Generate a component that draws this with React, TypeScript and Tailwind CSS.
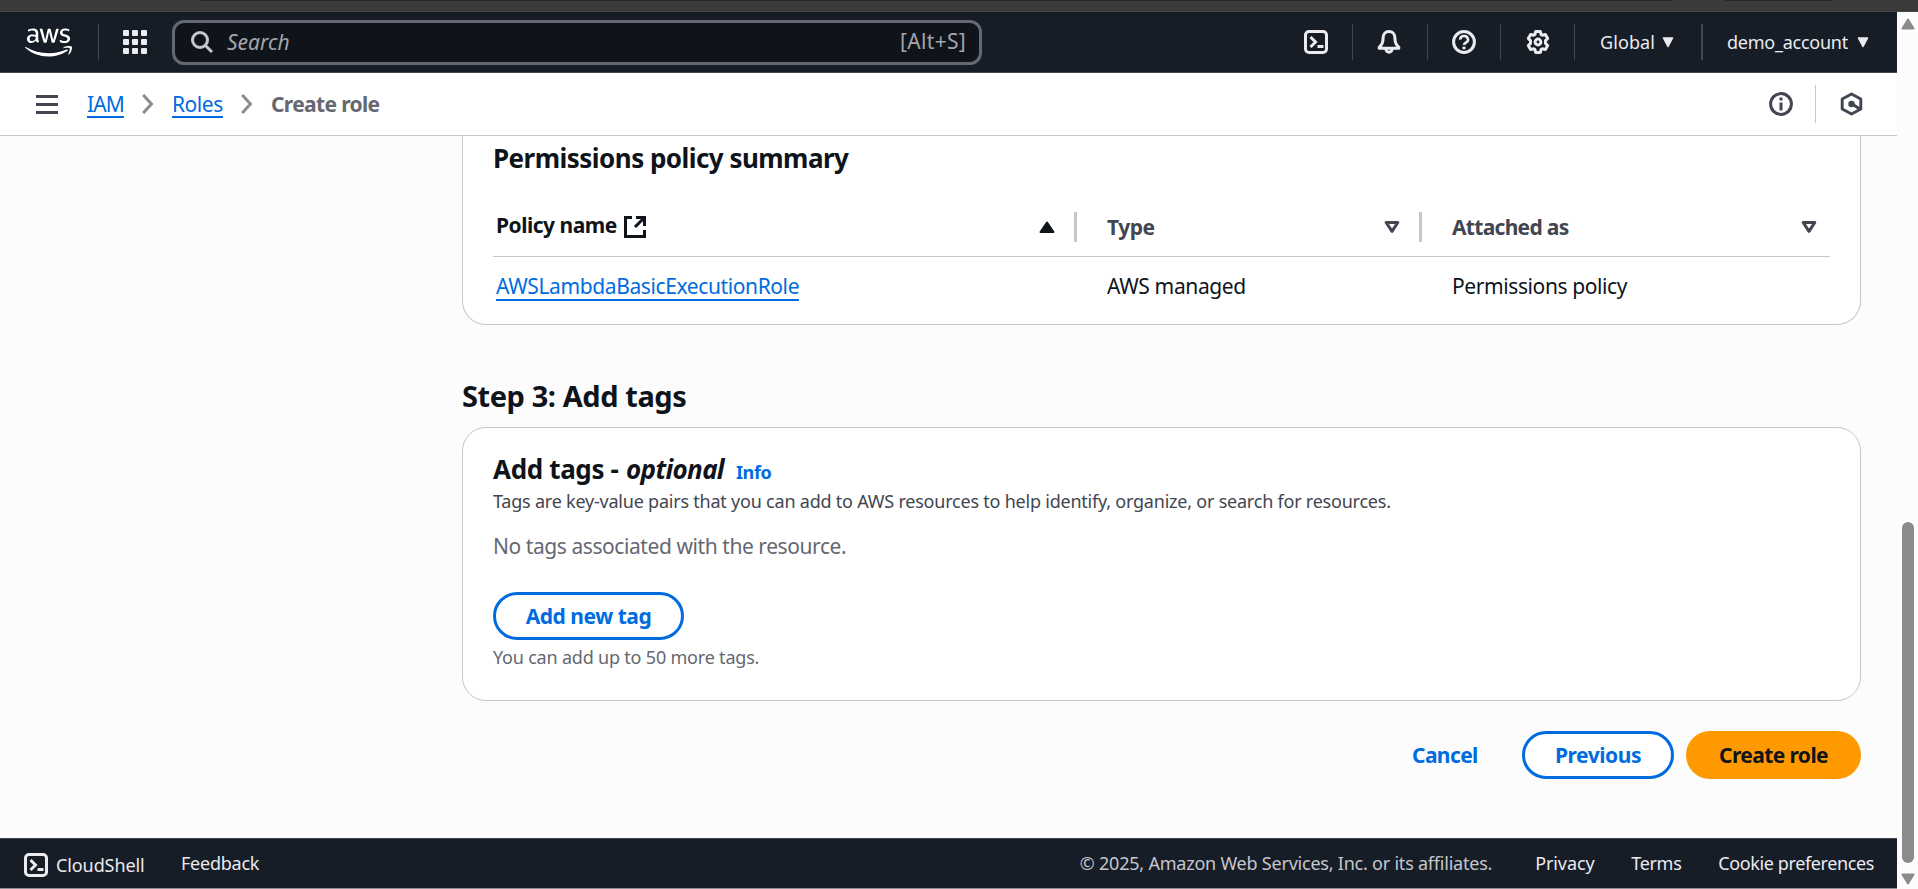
import type { ReactNode } from "react";
import { FaAws } from "react-icons/fa";

function ShellIcon() {
  return (
    <svg className="block size-6 shrink-0" viewBox="0 0 24 24" fill="none" stroke="#ebebf0" strokeWidth="3">
      <rect x="1.5" y="1.5" width="21" height="21" rx="3.5" />
      <path d="M6.5 7 11.5 12 6.5 17" />
      <path d="M13.5 16.5h6" />
    </svg>
  );
}

function BellIcon() {
  return (
    <svg className="block size-6" viewBox="0 0 24 24" fill="none" stroke="#ebebf0" strokeWidth="3" strokeLinejoin="round">
      <path d="M12 1.5c-3.9 0-5.900 2.800-5.900 6.500 0 4.600-1 7-3.900 9.200v1h19.600v-1c-2.900-2.200-3.900-4.600-3.900-9.200 0-3.700-2-6.500-5.900-6.500Z" />
      <path d="M8.900 19a3.100 3.300 0 0 0 6.200 0" />
    </svg>
  );
}

function HelpIcon() {
  return (
    <svg className="block size-6" viewBox="0 0 24 24" fill="none" stroke="#ebebf0" strokeWidth="3">
      <circle cx="12" cy="12" r="10.400" />
      <path d="M8.200 9.600a3.900 3.500 0 1 1 5.500 3.100c-1.100.5-1.600 1-1.600 2.400" strokeWidth="2.600" />
      <path d="M12 16.600v2.700" />
    </svg>
  );
}

function GearIcon() {
  return (
    <svg className="block size-6" viewBox="0 0 24 24" fill="none" stroke="#ebebf0" strokeWidth="3" strokeLinejoin="round">
      <path d="M9.600 1.600h4.800l.7 3 1.300.7 3-.9 2.300 4-2.200 2.200v2.800l2.200 2.200-2.300 4-3-.9-1.300.7-.7 3H9.600l-.7-3-1.300-.7-3 .9-2.300-4 2.200-2.200v-2.800L2.300 8.400l2.300-4 3 .9 1.300-.7Z" />
      <circle cx="12" cy="12" r="2.900" />
    </svg>
  );
}

function CaretDown() {
  return (
    <svg className="block h-[11px] w-3" viewBox="0 0 12 11">
      <path d="M1.500 1h9L6 9.500Z" fill="#ebebf0" stroke="#ebebf0" strokeWidth="1.600" strokeLinejoin="round" />
    </svg>
  );
}

function SortCaret() {
  return (
    <svg className="block h-3 w-4 shrink-0" viewBox="0 0 16 12" fill="none" stroke="#424650" strokeWidth="3" strokeLinejoin="round">
      <path d="M2.200 1.500h11.600L8 10.300Z" />
    </svg>
  );
}

function Chevron() {
  return (
    <svg className="block h-5 w-3" viewBox="0 0 12 20" fill="none" stroke="#8c8c94" strokeWidth="3">
      <path d="M1.200 1 9.500 10 1.200 19" />
    </svg>
  );
}

function Divider() {
  return <span className="h-9 w-px shrink-0 bg-[#424650]" />;
}

function Slot({ width, children }: { width: string; children: ReactNode }) {
  return <div className={`flex shrink-0 items-center justify-center ${width}`}>{children}</div>;
}

function Header() {
  return (
    <header className="flex h-[61px] items-center border-b border-[#424650] bg-[#161d26] text-[#ebebf0]">
      <div className="flex w-[98px] shrink-0 pl-[25px]">
        <FaAws className="h-[47px] w-[47px] text-white" />
      </div>
      <Divider />
      <div className="ml-6 grid size-6 shrink-0 grid-cols-3 gap-[3px]">
        {Array.from({ length: 9 }, (_, i) => (
          <span key={i} className="size-[6px] rounded-[1px] bg-[#ebebf0]" />
        ))}
      </div>
      <div className="ml-[25px] flex h-[45px] w-[810px] shrink-0 items-center rounded-xl border-[3px] border-[#656871] bg-[#0f141a] pr-[13px] pl-4 text-[21px] text-[#a4a4ad]">
        <svg className="block size-[22px]" viewBox="0 0 22 22" fill="none" stroke="#c6c6cd" strokeWidth="3">
          <circle cx="9" cy="9" r="7.500" />
          <path d="m14.200 14.200 6.800 6.800" />
        </svg>
        <span className="ml-[14px] flex-1 leading-[38px] italic">Search</span>
        <span className="tracking-[0.3px]">[Alt+S]</span>
      </div>
      <div className="ml-auto flex items-center text-lg">
        <Slot width="w-[72px]"><ShellIcon /></Slot>
        <Divider />
        <Slot width="w-[74px] pr-[2px]"><BellIcon /></Slot>
        <Divider />
        <Slot width="w-[72px]"><HelpIcon /></Slot>
        <Divider />
        <Slot width="w-[73px]"><GearIcon /></Slot>
        <Divider />
        <div className="flex w-[126px] items-center pl-[25px]">
          <span className="-mt-px w-[62px] tracking-[0.1px]">Global</span>
          <CaretDown />
        </div>
        <span className="h-9 w-[2px] bg-[#424650]" />
        <div className="flex w-[194px] items-center pl-[24px]">
          <span className="-mt-px w-[130px] tracking-[-0.25px]">demo_account</span>
          <CaretDown />
        </div>
      </div>
    </header>
  );
}

function Breadcrumbs() {
  return (
    <nav className="flex h-[63px] shrink-0 items-center border-b border-[#c6c6cd] bg-white pl-9 text-[21px]">
      <div className="flex w-[22px] flex-col gap-[5px]">
        <span className="h-[3px] bg-[#424650]" />
        <span className="h-[3px] bg-[#424650]" />
        <span className="h-[3px] bg-[#424650]" />
      </div>
      <a className="ml-[29px] h-[28px] w-[37px] border-b-2 border-[#006ce0] leading-[28px] tracking-[-0.9px] text-[#006ce0]">IAM</a>
      <div className="ml-[18px]"><Chevron /></div>
      <a className="ml-[18px] h-[28px] w-[51px] border-b-2 border-[#006ce0] leading-[28px] tracking-[-0.45px] text-[#006ce0]">Roles</a>
      <div className="ml-[18px]"><Chevron /></div>
      <span className="ml-[18px] leading-[28px] font-bold tracking-[-0.65px] text-[#656871]">Create role</span>
      <div className="ml-auto flex items-center">
        <svg className="block size-6" viewBox="0 0 24 24" fill="none" stroke="#424650" strokeWidth="3">
          <circle cx="12" cy="12" r="10.400" />
          <path d="M12 10.500v8M12 5.500v3" />
        </svg>
        <span className="ml-[22px] h-[38px] w-px bg-[#c6c6cd]" />
        <svg className="mr-[34px] ml-6 block h-6 w-[23px]" viewBox="0 0 23 24" fill="none" stroke="#424650" strokeWidth="2.900" strokeLinejoin="round">
          <path d="M11.500 1.900 2.200 7v10l9.300 5.100L20.800 17V7Z" />
          <path d="m12 12 7.500 4.800" />
          <circle cx="11.500" cy="12" r="1.800" fill="#424650" />
        </svg>
      </div>
    </nav>
  );
}

function PolicyCard() {
  return (
    <section className="h-[189px] rounded-b-3xl border border-t-0 border-[#c6c6cd] bg-white px-[30px]">
      <h2 className="h-[76px] pt-[2px] text-[26px] leading-[40px] font-bold tracking-[-0.53px]">Permissions policy summary</h2>
      <div className="flex h-[45px] border-b border-[#c6c6cd] text-[21px] leading-[30px] font-bold">
        <div className="flex h-[30px] w-[584px] items-center border-r-[3px] border-[#c6c6cd] pr-[19px] pl-[3px]">
          <span className="-mt-1 tracking-[-0.5px]">Policy name</span>
          <svg className="ml-[7px] block size-[22px]" viewBox="0 0 22 22" fill="none" stroke="#0f141a" strokeWidth="3">
            <path d="M8 1.500H1.500v19h19V14" />
            <path d="M12 1.500h8.500V10M20 2l-9 9" />
          </svg>
          <svg className="ml-auto block h-3 w-4" viewBox="0 0 16 12">
            <path d="M8 1.500 14.500 11h-13Z" fill="#0f141a" stroke="#0f141a" strokeWidth="2" strokeLinejoin="round" />
          </svg>
        </div>
        <div className="flex h-[30px] w-[345px] items-center justify-between border-r-[3px] border-[#c6c6cd] pr-[19px] pl-[30px] text-[#424650]">
          <span className="tracking-[-0.5px]">Type</span>
          <SortCaret />
        </div>
        <div className="flex h-[30px] flex-1 items-center justify-between pr-[13px] pl-[30px] text-[#424650]">
          <span className="tracking-[-0.7px]">Attached as</span>
          <SortCaret />
        </div>
      </div>
      <div className="flex pt-4 text-[21px] leading-[27px]">
        <div className="w-[584px] pl-[3px]">
          <a className="block h-[28px] w-[303px] border-b-2 border-[#006ce0] tracking-[-0.39px] text-[#006ce0]">AWSLambdaBasicExecutionRole</a>
        </div>
        <div className="w-[345px] pl-[30px] tracking-[-0.37px]">AWS managed</div>
        <div className="pl-[30px] tracking-[-0.4px]">Permissions policy</div>
      </div>
    </section>
  );
}

function TagsCard() {
  return (
    <section className="h-[274px] rounded-3xl border border-[#c6c6cd] bg-white px-[30px] pt-[22px]">
      <h3 className="flex h-[38px] items-baseline text-[26px] leading-[39px] font-bold">
        <span className="w-[133px] tracking-[-0.35px]">Add tags -</span>
        <span className="w-[110px] tracking-[-0.65px] italic">optional</span>
        <span className="text-lg leading-[30px] tracking-[-0.4px] text-[#006ce0]">Info</span>
      </h3>
      <p className="text-lg leading-[26px] tracking-[-0.22px] text-[#424650]">
        Tags are key-value pairs that you can add to AWS resources to help identify, organize, or search for resources.
      </p>
      <p className="mt-[17px] text-[21px] leading-[30px] tracking-[-0.43px] text-[#656871]">No tags associated with the resource.</p>
      <button className="mt-[31px] block h-12 w-[191px] rounded-3xl border-[3px] border-[#006ce0] bg-white text-[21px] leading-[42px] font-bold tracking-[-0.47px] text-[#006ce0]">
        Add new tag
      </button>
      <p className="mt-[5px] text-lg leading-[24px] tracking-[-0.2px] text-[#656871]">You can add up to 50 more tags.</p>
    </section>
  );
}

function Footer() {
  return (
    <footer className="flex h-[51px] shrink-0 items-center border-t border-b border-t-[#424650] border-b-[#8c8c94] bg-[#161d26] pr-[23px] pl-6 text-lg leading-[26px] text-[#ebebf0]">
      <div className="flex w-[157px] items-center pt-[3px]">
        <ShellIcon />
        <span className="-mt-px ml-[8px] tracking-[-0.1px]">CloudShell</span>
      </div>
      <span className="mb-px tracking-[-0.25px]">Feedback</span>
      <span className="mb-px ml-auto tracking-[-0.22px] text-[#c6c6cd]">© 2025, Amazon Web Services, Inc. or its affiliates.</span>
      <span className="mb-px ml-[43px] w-[96px] tracking-[-0.1px]">Privacy</span>
      <span className="mb-px w-[87px] tracking-[-0.3px]">Terms</span>
      <span className="mb-px tracking-[-0.38px]">Cookie preferences</span>
    </footer>
  );
}

function Scrollbar() {
  return (
    <div className="flex w-[21px] shrink-0 flex-col items-center bg-[#fcfcfc] pt-[6px]">
      <svg className="block h-3 w-[14px]" viewBox="0 0 14 12">
        <path d="M7 1.500 12.500 10.500h-11Z" fill="#8b8b8b" stroke="#8b8b8b" strokeWidth="2" strokeLinejoin="round" />
      </svg>
      <div className="mt-[492px] h-[341px] w-3 rounded-full bg-[#8b8b8b]" />
      <svg className="mt-[10px] block h-3 w-[14px]" viewBox="0 0 14 12">
        <path d="M1.500 1.500h11L7 10.500Z" fill="#8b8b8b" stroke="#8b8b8b" strokeWidth="2" strokeLinejoin="round" />
      </svg>
    </div>
  );
}

export default function App() {
  return (
    <div className="flex h-[889px] w-[1918px] flex-col overflow-hidden bg-[#fcfcfc] font-['Noto_Sans','Open_Sans',sans-serif] text-[#0f141a]">
      <div className="flex h-3 shrink-0 border-b border-[#454545] bg-[#3b3b3b]">
        <span className="ml-[200px] h-px w-[1473px] bg-[#262626]" />
        <span className="ml-[52px] h-px w-[108px] bg-[#262626]" />
      </div>
      <div className="flex min-h-0 flex-1">
        <div className="flex w-[1897px] shrink-0 flex-col">
          <Header />
          <Breadcrumbs />
          <main className="flex-1 pr-9 pl-[462px]">
            <PolicyCard />
            <h1 className="mt-[51px] mb-[11px] text-[29px] leading-[40px] font-bold tracking-[-0.42px]">Step 3: Add tags</h1>
            <TagsCard />
            <div className="mt-[30px] flex justify-end text-[21px] leading-[42px] font-bold">
              <button className="w-[110px] pr-[45px] text-right tracking-[-0.6px] text-[#006ce0]">Cancel</button>
              <button className="h-12 w-[152px] rounded-3xl border-[3px] border-[#006ce0] bg-white tracking-[-0.47px] text-[#006ce0]">Previous</button>
              <button className="ml-3 h-12 w-[175px] rounded-3xl bg-[#ff9900] tracking-[-0.6px]">Create role</button>
            </div>
          </main>
          <Footer />
        </div>
        <Scrollbar />
      </div>
    </div>
  );
}
